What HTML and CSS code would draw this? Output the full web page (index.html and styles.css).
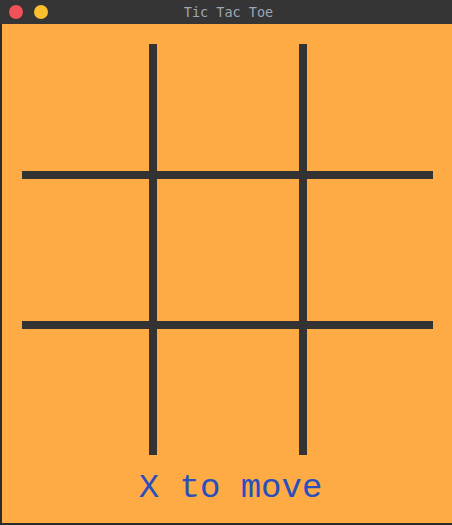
FILE: index.html
```html
<!DOCTYPE html>
<html>
<head>
<meta charset="utf-8">
<link rel="stylesheet" href="styles.css">
</head>
<body>
<div class="window">
  <div class="titlebar">
    <div class="buttons">
      <span class="btn close"></span>
      <span class="btn min"></span>
    </div>
    <div class="title">Tic Tac Toe</div>
  </div>
  <div class="content">
    <div class="board">
      <div class="cell"></div><div class="cell"></div><div class="cell"></div>
      <div class="cell"></div><div class="cell"></div><div class="cell"></div>
      <div class="cell"></div><div class="cell"></div><div class="cell"></div>
    </div>
    <div class="status">X to move</div>
  </div>
</div>
</body>
</html>
```
FILE: styles.css
```css
html, body {
  margin: 0;
  padding: 0;
  background: #2b2b2b;
}
.window {
  width: 452px;
  height: 525px;
  display: flex;
  flex-direction: column;
  background: #2b2b2b;
}
.titlebar {
  height: 24px;
  background: #353535;
  display: flex;
  align-items: center;
}
.buttons {
  display: flex;
  gap: 11px;
  padding-left: 9px;
}
.btn {
  width: 14px;
  height: 14px;
  border-radius: 50%;
  display: block;
}
.close { background: #f1515a; }
.min { background: #fbc02d; }
.title {
  flex: 1;
  text-align: center;
  font-family: "DejaVu Sans Mono", monospace;
  font-size: 13.5px;
  color: #9ea7b3;
  margin-left: -45px;
  padding-left: 2px;
  padding-bottom: 1px;
}
.content {
  margin-left: 2px;
  height: 499px;
  background: #ffab45;
  display: flex;
  flex-direction: column;
}
.board {
  margin: 20px 0 0 20px;
  width: 411px;
  height: 411px;
  display: grid;
  grid-template-columns: 127px 142px 126px;
  grid-template-rows: 127px 142px 126px;
  gap: 8px;
  background: #333333;
}
.cell {
  background: #ffab45;
}
.status {
  margin-top: 14px;
  font-family: "Liberation Mono", "Courier New", monospace;
  font-size: 34px;
  color: #2a4fbd;
  text-align: center;
  padding-left: 7px;
}
```
